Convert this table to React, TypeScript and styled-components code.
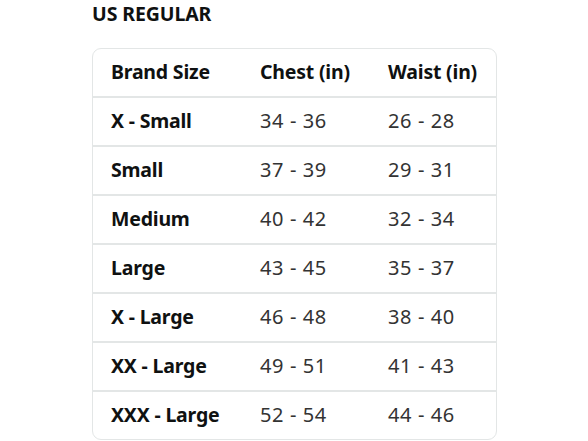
import React from "react";
import styled, { createGlobalStyle } from "styled-components";

const rows = [
    { size: "X - Small", chest: "34 - 36", waist: "26 - 28" },
    { size: "Small", chest: "37 - 39", waist: "29 - 31" },
    { size: "Medium", chest: "40 - 42", waist: "32 - 34" },
    { size: "Large", chest: "43 - 45", waist: "35 - 37" },
    { size: "X - Large", chest: "46 - 48", waist: "38 - 40" },
    { size: "XX - Large", chest: "49 - 51", waist: "41 - 43" },
    { size: "XXX - Large", chest: "52 - 54", waist: "44 - 46" },
];

export default function App() {
    return (
        <>
            <GlobalStyle />
            <PageStyled>
                <TitleStyled>US REGULAR</TitleStyled>
                <TableStyled>
                    <RowStyled>
                        <CellStyled $bold>Brand Size</CellStyled>
                        <CellStyled $bold>Chest (in)</CellStyled>
                        <CellStyled $bold>Waist (in)</CellStyled>
                    </RowStyled>
                    {rows.map((row) => (
                        <RowStyled key={row.size}>
                            <CellStyled $bold>{row.size}</CellStyled>
                            <CellStyled>{row.chest}</CellStyled>
                            <CellStyled>{row.waist}</CellStyled>
                        </RowStyled>
                    ))}
                </TableStyled>
            </PageStyled>
        </>
    );
}

const GlobalStyle = createGlobalStyle`
    html, body {
        margin: 0;
        padding: 0;
        background: #ffffff;
    }
    body {
        font-family: "Noto Sans", "Liberation Sans", sans-serif;
        color: #0f1111;
        -webkit-font-smoothing: antialiased;
    }
`;

const PageStyled = styled.main`
    width: 588px;
    height: 441px;
    overflow: hidden;
    padding-left: 92px;
    box-sizing: border-box;
`;

const TitleStyled = styled.h2`
    margin: 0;
    padding-top: 2px;
    height: 48px;
    box-sizing: border-box;
    font-size: 19.5px;
    line-height: 24px;
    font-weight: 700;
    letter-spacing: -0.1px;
    color: #0f1111;
`;

const TableStyled = styled.div`
    width: 405px;
    border: 1.5px solid #e3e6e6;
    border-radius: 9px;
    box-sizing: border-box;
    overflow: hidden;
`;

const RowStyled = styled.div`
    display: grid;
    grid-template-columns: 149px 128px 1fr;
    align-items: center;
    height: 49px;
    padding-left: 18px;
    padding-bottom: 1px;
    box-sizing: border-box;
    border-top: 2px solid #e3e6e6;

    &:first-child {
        border-top: none;
        height: 46.5px;
        padding-bottom: 1px;
    }
`;

const CellStyled = styled.div<{ $bold?: boolean }>`
    font-size: ${(p) => (p.$bold ? "19.5px" : "20px")};
    line-height: 24px;
    font-weight: ${(p) => (p.$bold ? 700 : 400)};
    color: ${(p) => (p.$bold ? "#0f1111" : "#333333")};
    letter-spacing: ${(p) => (p.$bold ? "-0.2px" : "0.6px")};
    white-space: nowrap;
`;
